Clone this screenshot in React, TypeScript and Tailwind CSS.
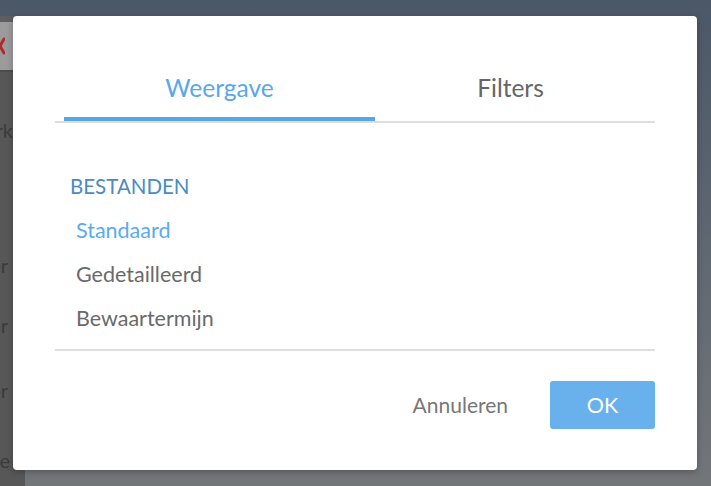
import { useState } from "react";

const ITEMS = ["Standaard", "Gedetailleerd", "Bewaartermijn"];

export default function App() {
  const [tab, setTab] = useState<"weergave" | "filters">("weergave");
  const [selected, setSelected] = useState("Standaard");

  return (
    <div className="relative w-[711px] h-[486px] overflow-hidden flex bg-gradient-to-b from-[#4b5868] to-[#737679] font-['Lato','Open_Sans',sans-serif]">
      {/* dimmed page behind the dialog */}
      <div className="mt-[16px] w-[25px] flex flex-col bg-[#575757] overflow-hidden text-[20px] leading-[24px] text-[#3b3b3b]">
        <div className="h-[6px] bg-[#5e5e5e]" />
        <div className="h-[48px] bg-[#9b9b9b] flex items-center">
          <svg width="10" height="24" viewBox="0 0 10 24" className="-ml-[5px]">
            <path d="M1 5 L9 19 M9 5 L1 19" stroke="#b02a2a" strokeWidth="3" strokeLinecap="round" />
          </svg>
        </div>
        <div className="h-[2px] bg-[#4d4d4d]" />
        <div className="mt-[46px] w-[13px] flex justify-end whitespace-nowrap">Werk</div>
        <div className="mt-[111px] w-[8px] flex justify-end whitespace-nowrap">er</div>
        <div className="mt-[36px] w-[8px] flex justify-end whitespace-nowrap">er</div>
        <div className="mt-[41px] w-[8px] flex justify-end whitespace-nowrap">er</div>
        <div className="mt-[46px] w-[10px] flex justify-end whitespace-nowrap">de</div>
      </div>

      {/* dialog */}
      <div className="absolute left-[13px] top-[16px] w-[684px] h-[454px] bg-white rounded-[4px] shadow-[0_2px_6px_rgba(0,0,0,0.25)] flex flex-col px-[42px]">
        <div className="mt-[44px] border-b-2 border-[#dedede]">
          <div className="flex ml-[9px]">
            <button
              onClick={() => setTab("weergave")}
              className="w-[311px] flex flex-col"
            >
              <span className={`h-[57px] flex items-center justify-center text-[24.5px] ${tab === "weergave" ? "text-[#58a8ea]" : "text-[#666]"}`}>
                Weergave
              </span>
              <span className={`h-[4px] ${tab === "weergave" ? "bg-[#56a6e8]" : "bg-transparent"}`} />
            </button>
            <button
              onClick={() => setTab("filters")}
              className="w-[271px] flex flex-col"
            >
              <span className={`h-[57px] flex items-center justify-center text-[24.5px] ${tab === "filters" ? "text-[#58a8ea]" : "text-[#666]"}`}>
                Filters
              </span>
              <span className={`h-[4px] ${tab === "filters" ? "bg-[#56a6e8]" : "bg-transparent"}`} />
            </button>
          </div>
        </div>

        <div className="mt-[41px] flex flex-col">
          <div className="h-[44px] flex items-center pl-[15px] text-[20.5px] text-[#4a8bc3]">BESTANDEN</div>
          {ITEMS.map((item) => (
            <button
              key={item}
              onClick={() => setSelected(item)}
              className={`h-[44px] flex items-center pl-[21px] text-[21.5px] text-left ${selected === item ? "text-[#5aabee]" : "text-[#6a6a6a]"}`}
            >
              {item}
            </button>
          ))}
        </div>

        <div className="mt-[9px] border-t-2 border-[#dedede]" />

        <div className="mt-[30px] flex items-center justify-end">
          <button className="text-[21px] text-[#777] mr-[42px]">Annuleren</button>
          <button className="w-[105px] h-[48px] rounded-[3px] bg-[#69b1ec] text-white text-[21.5px]">OK</button>
        </div>
      </div>
    </div>
  );
}
